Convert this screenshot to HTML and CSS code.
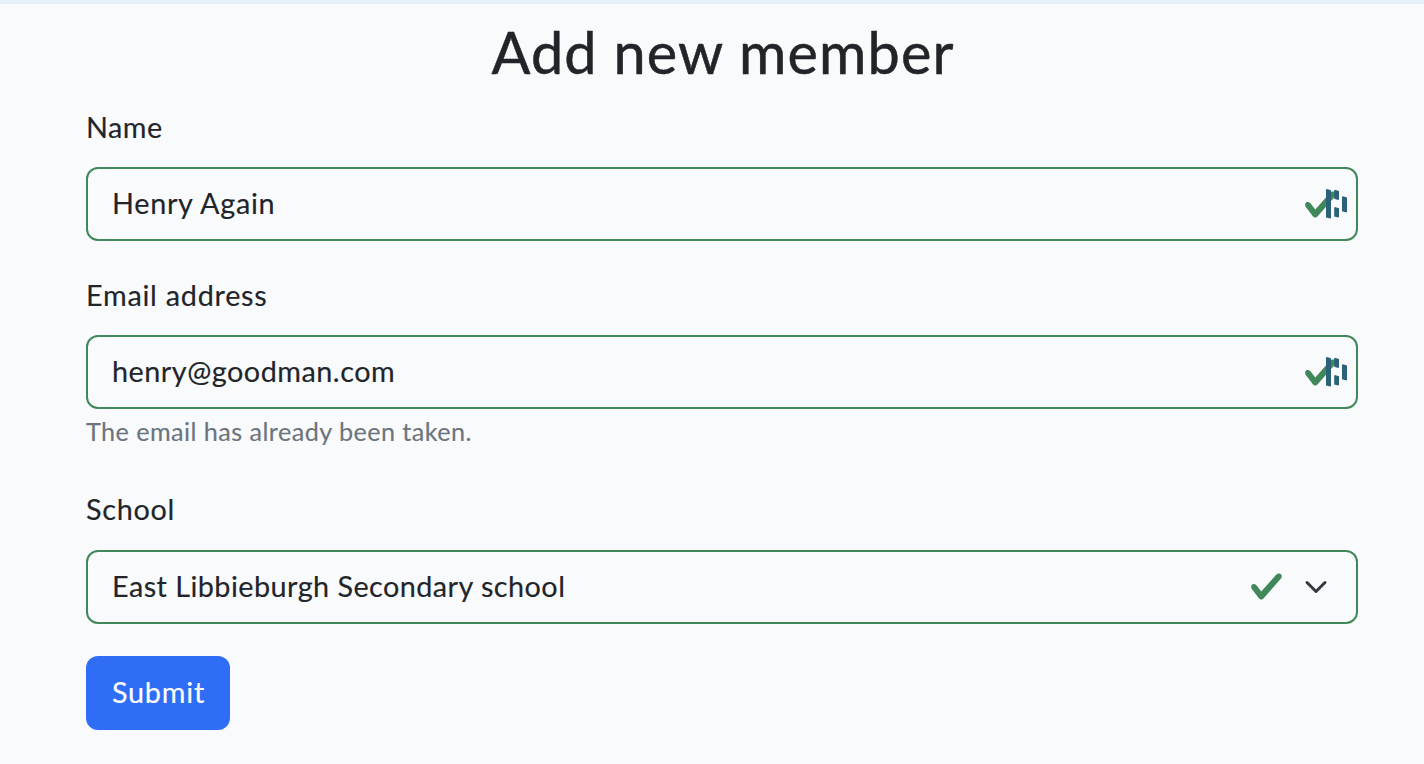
FILE: index.html
```html
<!DOCTYPE html>
<html lang="en">
<head>
<meta charset="utf-8">
<title>Add new member</title>
<link rel="stylesheet" href="styles.css">
</head>
<body>
<svg class="defs" aria-hidden="true">
  <symbol id="check" viewBox="0 0 8 8"><path fill="#40875a" d="M2.3 6.73.6 4.53c-.4-1.04.46-1.4 1.1-.8l1.1 1.4 3.4-3.8c.6-.63 1.6-.27 1.2.7l-4 4.6c-.43.5-.8.4-1.1.1z"/></symbol>
  <symbol id="bars" viewBox="0 0 21 30"><path fill="#2b6279" d="M0 .6 .8 0 5 1.200V29l-.8.6L0 28.600zM8.200 1.300 9 .8 13 2V10.300L12.200 11 8.200 9.800zM8.200 18.700l.8-.6L13 19.300V28l-.8.6-4-1.100zM16 7.800l.8-.6 4.200 1.200V22.800l-.8.6L16 22.200z"/></symbol>
</svg>
<main class="page">
  <h1 class="title"><span class="title-text">Add new member</span></h1>
  <form>
    <div class="field">
      <label class="label label-name" for="name">Name</label>
      <div class="control">
        <input class="input input-name" id="name" type="text" value="Henry Again">
        <div class="icons"><svg class="check"><use href="#check"/></svg><svg class="bars"><use href="#bars"/></svg></div>
      </div>
    </div>
    <div class="field">
      <label class="label label-email" for="email">Email address</label>
      <div class="control">
        <input class="input input-email" id="email" type="text" value="henry@goodman.com">
        <div class="icons"><svg class="check"><use href="#check"/></svg><svg class="bars"><use href="#bars"/></svg></div>
      </div>
      <div class="help"><span class="help-text">The email has already been taken.</span></div>
    </div>
    <div class="field">
      <label class="label label-school" for="school">School</label>
      <div class="control">
        <select class="input input-school" id="school"><option>East Libbieburgh Secondary school</option></select>
        <div class="icons icons-select"><svg class="check"><use href="#check"/></svg><svg class="chevron" viewBox="0 0 16 16"><path d="m2 5 6 6 6-6"/></svg></div>
      </div>
    </div>
    <button class="submit" type="button">Submit</button>
  </form>
</main>
</body>
</html>
```
FILE: styles.css
```css
* { box-sizing: border-box; }
body {
  margin: 0;
  height: 764px;
  overflow: hidden;
  border-top: 4px solid #e5f2fd;
  background: #f9fafc;
  color: #212529;
  font: 28.8px/46px Lato, "Open Sans", sans-serif;
  -webkit-text-stroke: 0.15px;
}
.defs { display: none; }
.page { padding: 13px 66px 0 86px; }
.title {
  margin: 0 0 19px;
  font-size: 57.6px;
  font-weight: 400;
  line-height: 69px;
  text-align: center;
  -webkit-text-stroke: 0.5px;
}
.title-text { letter-spacing: 1.12px; padding-left: 2px; }
.field { margin-bottom: 32px; }
.label { display: block; margin-bottom: 18px; line-height: 44px; }
.label-name { letter-spacing: 0.5px; }
.label-email { letter-spacing: 0.74px; }
.label-school { letter-spacing: 0.7px; line-height: 42px; margin-bottom: 20px; }
.control { display: grid; }
.control > * { grid-area: 1 / 1; }
.input {
  appearance: none;
  width: 100%;
  height: 74px;
  margin: 0;
  padding: 0 24px 3px;
  border: 2px solid #40875a;
  border-radius: 12px;
  outline: 0;
  background: #f9fafc;
  color: inherit;
  font: inherit;
}
.input-name { letter-spacing: 0.7px; }
.input-email { letter-spacing: 0.5px; }
.input-school { letter-spacing: 0.45px; }
.icons {
  display: flex;
  align-items: center;
  justify-content: flex-end;
  padding-right: 11px;
  pointer-events: none;
}
.check { width: 35px; height: 35px; }
.bars { width: 21px; height: 30px; margin-left: -12px; }
.icons-select { padding-right: 30px; gap: 20px; }
.icons-select .check { margin-bottom: 1px; }
.chevron {
  width: 24px;
  height: 24px;
  fill: none;
  stroke: #343a40;
  stroke-width: 2;
  stroke-linecap: round;
  stroke-linejoin: round;
}
.help {
  margin-top: 7px;
  height: 40px;
  font-size: 25.2px;
  line-height: 30px;
  letter-spacing: 0.44px;
  color: #6c757d;
}
.submit {
  display: block;
  width: 144px;
  height: 74px;
  padding: 0 0 3px 1px;
  border: 0;
  border-radius: 12px;
  background: #306df6;
  color: #fff;
  font: inherit;
  letter-spacing: 0.8px;
}
```
